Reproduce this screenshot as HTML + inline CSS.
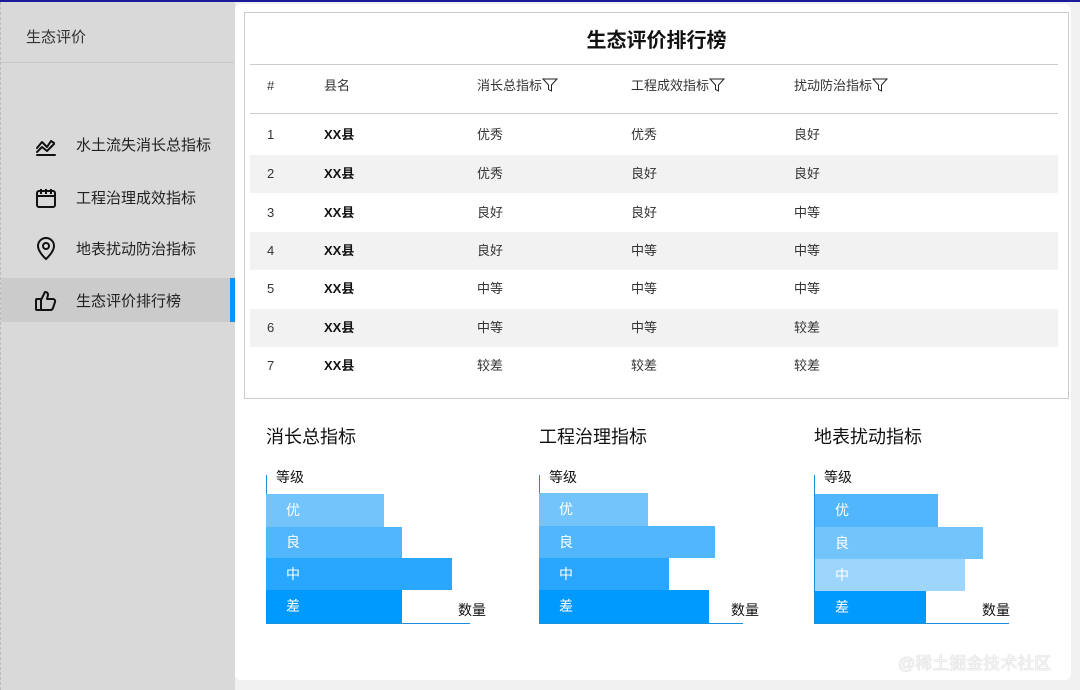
<!DOCTYPE html>
<html><head><meta charset="utf-8"><style>
*{margin:0;padding:0;box-sizing:border-box}
body{width:1080px;height:690px;overflow:hidden;background:#f0f0f0;font-family:"Liberation Sans","Noto Sans CJK SC",sans-serif;position:relative;color:#333}
.topline{position:absolute;left:0;top:0;width:1080px;height:2px;background:#1a1a9a}
.side{position:absolute;left:0;top:2px;width:235px;height:688px;background:#d9d9d9;border-left:1px dashed #bbb}
.side .t{position:absolute;left:25px;top:24px;font-size:15px;color:#333}
.side .hr{position:absolute;left:0;top:60px;width:233px;height:1px;background:#c8c8c8}
.item{position:absolute;left:0;width:235px;height:44px;font-size:15px;color:#222}
.item span{position:absolute;left:75px;top:12px}
.item svg{position:absolute;left:33px;top:11px}
.item.act{background:#cbcbcb}
.item.act:after{content:"";position:absolute;right:0;top:0;width:6px;height:44px;background:#0a95f5}
.main{position:absolute;left:235px;top:4px;width:836px;height:676px;background:#fff;border-radius:6px}
.box{position:absolute;left:244px;top:12px;width:825px;height:387px;border:1px solid #ccc;background:#fff}
.title{position:absolute;left:244px;top:24px;width:825px;text-align:center;font-size:20px;font-weight:bold;color:#111}
.ln{position:absolute;left:250px;width:808px;height:1px;background:#ccc}
.row{position:absolute;left:250px;width:808px;height:38px;font-size:13px;color:#333}
.row.s{background:#f2f2f2}
.row div{position:absolute;top:0;line-height:38px;height:38px;white-space:nowrap}
.row svg{vertical-align:-3px}
.c0{left:17px}.c1{left:74px;font-weight:bold;color:#111}.c2{left:227px}.c3{left:381px}.c4{left:544px}
.ct{position:absolute;font-size:18px;color:#111}
.ax{position:absolute;width:1px;height:148px;background:#1a8fd8}
.bx{position:absolute;height:1px;background:#1a8fd8}
.bar{position:absolute;height:33px;color:#fff;font-size:14px;padding-left:20px;line-height:33px}
.lab{position:absolute;font-size:14px;color:#111}
.wm{position:absolute;left:898px;top:649px;font-size:17px;color:#f4f4f4;text-shadow:0 0 1px #aaa}
</style></head><body>
<div class="topline"></div>
<div class="side">
<div class="t">生态评价</div><div class="hr"></div>
<div class="item" style="top:120px"><svg width="24" height="24" viewBox="0 0 24 24" fill="none" stroke="#111" stroke-width="2" stroke-linecap="round" stroke-linejoin="round"><path d="M3 15l5-6 5 5 4-6 3 2"/><path d="M3 19l5-5 5 4 7-7"/><path d="M3 22h18"/></svg><span>水土流失消长总指标</span></div>
<div class="item" style="top:173px"><svg width="24" height="24" viewBox="0 0 24 24" fill="none" stroke="#111" stroke-width="2" stroke-linejoin="round"><rect x="3" y="5" width="18" height="16" rx="2"/><path d="M3 10h18M7 3v5M12 3v5M17 3v5"/></svg><span>工程治理成效指标</span></div>
<div class="item" style="top:224px"><svg width="24" height="24" viewBox="0 0 24 24" fill="none" stroke="#111" stroke-width="2"><path d="M12 22s-8-7-8-13a8 8 0 0116 0c0 6-8 13-8 13z"/><circle cx="12" cy="9" r="3"/></svg><span>地表扰动防治指标</span></div>
<div class="item act" style="top:276px"><svg width="24" height="24" viewBox="0 0 24 24" fill="none" stroke="#111" stroke-width="2" stroke-linejoin="round"><rect x="2" y="10" width="5" height="11" rx="1"/><path d="M7 11l4-8c2 0 3 1 3 3l-1 4h6c1.5 0 2.5 1.5 2 3l-2 6c-.4 1.2-1.3 2-2.5 2H7"/></svg><span>生态评价排行榜</span></div>
</div>
<div class="main"></div>
<div class="box"></div>
<div class="title">生态评价排行榜</div>
<div class="ln" style="top:64px"></div>
<div class="row" style="top:67px;height:38px"><div class="c0">#</div><div class="c1" style="font-weight:normal;color:#333">县名</div><div class="c2">消长总指标<svg width="16" height="16" viewBox="0 0 16 16" fill="none" stroke="#222" stroke-width="1"><path d="M1 2h14l-5.5 6v6l-3-1.5V8z"/></svg></div><div class="c3">工程成效指标<svg width="16" height="16" viewBox="0 0 16 16" fill="none" stroke="#222" stroke-width="1"><path d="M1 2h14l-5.5 6v6l-3-1.5V8z"/></svg></div><div class="c4">扰动防治指标<svg width="16" height="16" viewBox="0 0 16 16" fill="none" stroke="#222" stroke-width="1"><path d="M1 2h14l-5.5 6v6l-3-1.5V8z"/></svg></div></div>
<div class="ln" style="top:113px"></div>
<div class="row" style="top:116px"><div class="c0">1</div><div class="c1">XX县</div><div class="c2">优秀</div><div class="c3">优秀</div><div class="c4">良好</div></div>
<div class="row s" style="top:155px"><div class="c0">2</div><div class="c1">XX县</div><div class="c2">优秀</div><div class="c3">良好</div><div class="c4">良好</div></div>
<div class="row" style="top:194px"><div class="c0">3</div><div class="c1">XX县</div><div class="c2">良好</div><div class="c3">良好</div><div class="c4">中等</div></div>
<div class="row s" style="top:232px"><div class="c0">4</div><div class="c1">XX县</div><div class="c2">良好</div><div class="c3">中等</div><div class="c4">中等</div></div>
<div class="row" style="top:270px"><div class="c0">5</div><div class="c1">XX县</div><div class="c2">中等</div><div class="c3">中等</div><div class="c4">中等</div></div>
<div class="row s" style="top:309px"><div class="c0">6</div><div class="c1">XX县</div><div class="c2">中等</div><div class="c3">中等</div><div class="c4">较差</div></div>
<div class="row" style="top:347px"><div class="c0">7</div><div class="c1">XX县</div><div class="c2">较差</div><div class="c3">较差</div><div class="c4">较差</div></div>

<div class="ct" style="left:266px;top:423px">消长总指标</div>
<div class="ct" style="left:539px;top:423px">工程治理指标</div>
<div class="ct" style="left:814px;top:423px">地表扰动指标</div>

<div class="ax" style="left:266px;top:475px"></div><div class="bx" style="left:266px;top:623px;width:204px"></div>
<div class="lab" style="left:276px;top:467px">等级</div><div class="lab" style="left:458px;top:600px">数量</div>
<div class="bar" style="left:266px;top:494px;width:118px;background:#74c4fc">优</div>
<div class="bar" style="left:266px;top:527px;width:136px;height:31px;line-height:31px;background:#52b6fd">良</div>
<div class="bar" style="left:266px;top:558px;width:186px;height:32px;line-height:32px;background:#29a6fd">中</div>
<div class="bar" style="left:266px;top:590px;width:136px;background:#0099fd">差</div>

<div class="ax" style="left:539px;top:475px"></div><div class="bx" style="left:539px;top:623px;width:204px"></div>
<div class="lab" style="left:549px;top:467px">等级</div><div class="lab" style="left:731px;top:600px">数量</div>
<div class="bar" style="left:539px;top:493px;width:109px;background:#74c4fc">优</div>
<div class="bar" style="left:539px;top:526px;width:176px;height:32px;line-height:32px;background:#52b6fd">良</div>
<div class="bar" style="left:539px;top:558px;width:130px;height:32px;line-height:32px;background:#29a6fd">中</div>
<div class="bar" style="left:539px;top:590px;width:170px;background:#0099fd">差</div>

<div class="ax" style="left:814px;top:475px"></div><div class="bx" style="left:814px;top:623px;width:195px"></div>
<div class="lab" style="left:824px;top:467px">等级</div><div class="lab" style="left:982px;top:600px">数量</div>
<div class="bar" style="left:815px;top:494px;width:123px;background:#52b6fd">优</div>
<div class="bar" style="left:815px;top:527px;width:168px;height:32px;line-height:32px;background:#74c4fc">良</div>
<div class="bar" style="left:815px;top:559px;width:150px;height:32px;line-height:32px;background:#9dd5fc">中</div>
<div class="bar" style="left:815px;top:591px;width:111px;height:32px;line-height:32px;background:#0099fd">差</div>

<div class="wm">@稀土掘金技术社区</div>
</body></html>
